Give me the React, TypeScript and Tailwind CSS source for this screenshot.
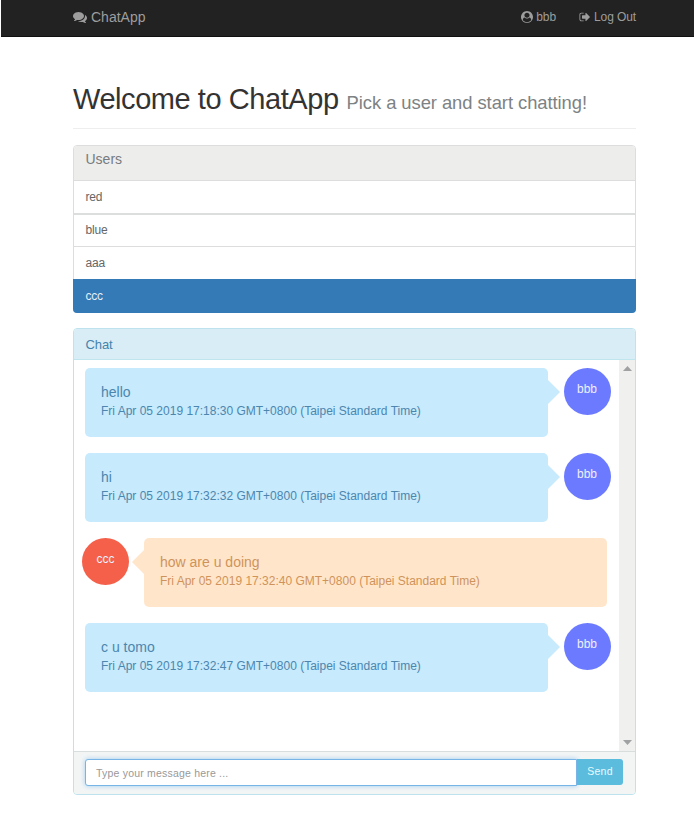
const icons = {
  comments:
    "M1408 768q0 139-94 257t-256.5 186.5-353.5 68.5q-86 0-176-16-124 88-278 128-36 9-86 16h-3q-11 0-20.5-8t-11.5-21q-1-3-1-6.5t.5-6.5 2-6l2.5-5 3.5-5.5 4-5 4.5-5 4-4.5q5-6 23-25t26-29.5 22.5-29 25-38.5 20.5-44q-124-72-195-177t-71-224q0-139 94-257t256.5-186.5 353.5-68.5 353.5 68.5 256.5 186.5 94 257zm384 256q0 120-71 224.5t-195 176.5q10 24 20.5 44t25 38.5 22.5 29 26 29.5 23 25q1 1 4 4.5t4.5 5 4 5 3.5 5.5l2.5 5 2 6 .5 6.5-1 6.5q-3 14-13 22t-22 7q-50-7-86-16-154-40-278-128-90 16-176 16-271 0-472-132 58 4 88 4 161 0 309-45t264-129q125-92 192-212t67-254q0-77-23-152 129 71 204 178t75 230z",
  user: "M1523 1339q-22-155-87.5-257.5t-184.5-118.5q-67 74-159.5 115.5t-195.5 41.5-195.5-41.5-159.5-115.5q-119 16-184.5 118.5t-87.5 257.5q106 150 271 237.5t356 87.5 356-87.5 271-237.5zm-243-699q0-159-112.5-271.5t-271.5-112.5-271.5 112.5-112.5 271.5 112.5 271.5 271.5 112.5 271.5-112.5 112.5-271.5zm512 256q0 182-71 347.5t-190.5 286-285.5 191.5-349 71-348.5-71-286-191-191-286-71-348 71-348 191-286 286-191 348-71 348 71 286 191 191 286 71 348z",
  signOut:
    "M704 1440q0 4 1 20t.5 26.5-3 23.5-10 19.5-20.5 6.5h-320q-119 0-203.5-84.5t-84.5-203.5v-704q0-119 84.5-203.5t203.5-84.5h320q13 0 22.5 9.5t9.5 22.5q0 4 1 20t.5 26.5-3 23.5-10 19.5-20.5 6.5h-320q-66 0-113 47t-47 113v704q0 66 47 113t113 47h312l11.5 1 11.5 3 8 5.5 7 9 2 13.5zm928-544q0 26-19 45l-544 544q-19 19-45 19t-45-19-19-45v-288h-448q-26 0-45-19t-19-45v-384q0-26 19-45t45-19h448v-288q0-26 19-45t45-19 45 19l544 544q19 19 19 45z",
};

function Icon({ path, className }: { path: string; className: string }) {
  return (
    <svg className={className} viewBox="0 0 1792 1792" fill="currentColor">
      <path fillRule="evenodd" d={path} />
    </svg>
  );
}

const users = [
  { name: "red", cls: "h-[32px] leading-[33px]" },
  { name: "blue", cls: "h-[33px] leading-[30px] border-t-2" },
  { name: "aaa", cls: "h-[33px] leading-[33px] border-t" },
];

const messages = [
  { user: "bbb", text: "hello", time: "17:18:30", mine: true },
  { user: "bbb", text: "hi", time: "17:32:32", mine: true },
  { user: "ccc", text: "how are u doing", time: "17:32:40", mine: false },
  { user: "bbb", text: "c u tomo", time: "17:32:47", mine: true },
];

function Message({ m }: { m: (typeof messages)[number] }) {
  return (
    <div className={m.mine ? "flex pl-[11px]" : "flex flex-row-reverse justify-end pl-[8px]"}>
      <div
        className={
          "relative h-[69px] w-[463px] rounded-[5px] px-4 pt-[16px] " +
          (m.mine ? "bg-[#c7eafd] text-[#4c86ae]" : "ml-[15px] bg-[#ffe6cb] text-[#cf935a]")
        }
      >
        <p className="text-[14px] leading-[17px]">{m.text}</p>
        <p className="pt-[2px] text-[12px] leading-[16px] whitespace-nowrap">
          Fri Apr 05 2019 {m.time} GMT+0800 (Taipei Standard Time)
        </p>
        <svg
          className={"absolute top-[12px] h-[24px] w-[12px] " + (m.mine ? "-right-[12px]" : "-left-[12px]")}
          viewBox="0 0 12 24"
        >
          <path d={m.mine ? "M0 0 12 12 0 24Z" : "M12 0 0 12 12 24Z"} fill={m.mine ? "#c7eafd" : "#ffe6cb"} />
        </svg>
      </div>
      <div
        className={
          "size-[47px] shrink-0 rounded-full text-center text-[12px] leading-[43px] text-[#eef0ff] " +
          (m.mine ? "ml-[15.5px] bg-[#6b7aff]" : "bg-[#f4604a]")
        }
      >
        {m.user}
      </div>
    </div>
  );
}

export default function App() {
  return (
    <div className="h-[817px] w-[694px] overflow-hidden bg-white font-['Liberation_Sans',Arial,sans-serif]">
      <nav className="ml-px flex h-[37px] items-center justify-between border-b border-[#101010] bg-[#222] pr-[58px] pb-[2px] pl-[72px] text-[#9d9d9d]">
        <div className="flex items-center gap-[4px] text-[14px]">
          <Icon path={icons.comments} className="size-[14px]" />
          <span>ChatApp</span>
        </div>
        <div className="flex items-center gap-[23px] text-[12px] tracking-[-0.1px]">
          <div className="flex items-center gap-[3px]">
            <Icon path={icons.user} className="size-[12px]" />
            <span>bbb</span>
          </div>
          <div className="flex items-center gap-[3px]">
            <Icon path={icons.signOut} className="size-[12px]" />
            <span>Log Out</span>
          </div>
        </div>
      </nav>

      <main className="ml-[73px] w-[563px]">
        <h1 className="flex h-[92px] items-baseline border-b border-[#eee] pt-[45px] text-[29px] leading-[34px] tracking-[-0.44px] whitespace-nowrap text-[#333]">
          Welcome to ChatApp
          <small className="pl-[8px] text-[18.4px] leading-none tracking-[-0.06px] text-[#7d8284]">
            Pick a user and start chatting!
          </small>
        </h1>

        <section className="mt-[16px] h-[168px] rounded-[4px] border border-[#dcdede] bg-white">
          <h2 className="h-[35px] rounded-t-[3px] border-b border-[#dcdede] bg-[#ededec] pl-[11.5px] text-[14px] leading-[27px] text-[#777c80]">
            Users
          </h2>
          <ul className="text-[12px] tracking-[-0.2px] text-[#666]">
            {users.map((u) => (
              <li key={u.name} className={"border-[#dcdede] pl-[11.5px] " + u.cls}>
                {u.name}
              </li>
            ))}
            <li className="-mx-px h-[34px] rounded-b-[4px] bg-[#337ab7] pl-[12.5px] leading-[35px] text-[#e4eff8]">ccc</li>
          </ul>
        </section>

        <section className="mt-[15px] h-[467px] overflow-hidden rounded-[4px] border border-[#bfe3ee] bg-white">
          <h2 className="h-[31px] border-b border-[#bfe6ef] bg-[#d9edf6] pl-[11.5px] text-[13px] leading-[31px] tracking-[-0.1px] text-[#4583ab]">
            Chat
          </h2>
          <div className="flex h-[391px] justify-between">
            <div className="flex flex-col gap-[16px] pt-[7.5px]">
              {messages.map((m) => (
                <Message key={m.time} m={m} />
              ))}
            </div>
            <div className="flex w-[16px] flex-col items-center justify-between bg-[#f0f0ef] py-[6px]">
              <svg className="h-[5px] w-[9px]" viewBox="0 0 9 5">
                <path d="M0 5 4.5 0 9 5Z" fill="#a0a1a3" />
              </svg>
              <svg className="h-[5px] w-[9px]" viewBox="0 0 9 5">
                <path d="M0 0 4.5 5 9 0Z" fill="#a0a1a3" />
              </svg>
            </div>
          </div>
          <div className="flex h-[43px] border-t border-[#d8dddd] bg-[#f3f5f5] pt-[7px] pl-[11px]">
            <input
              className="h-[27px] w-[492px] rounded-l-[3px] border-[1.5px] border-[#78b4e6] bg-white px-[10px] text-[10.5px] tracking-[0.2px] shadow-[0_0_5px_#9fcdf0] outline-none placeholder:text-[#999]"
              placeholder="Type your message here ..."
            />
            <button className="z-10 h-[26px] w-[46px] rounded-r-[3px] bg-[#5bbcdd] text-[10.5px] tracking-[0.3px] text-[#eafaff]">
              Send
            </button>
          </div>
        </section>
      </main>
    </div>
  );
}
